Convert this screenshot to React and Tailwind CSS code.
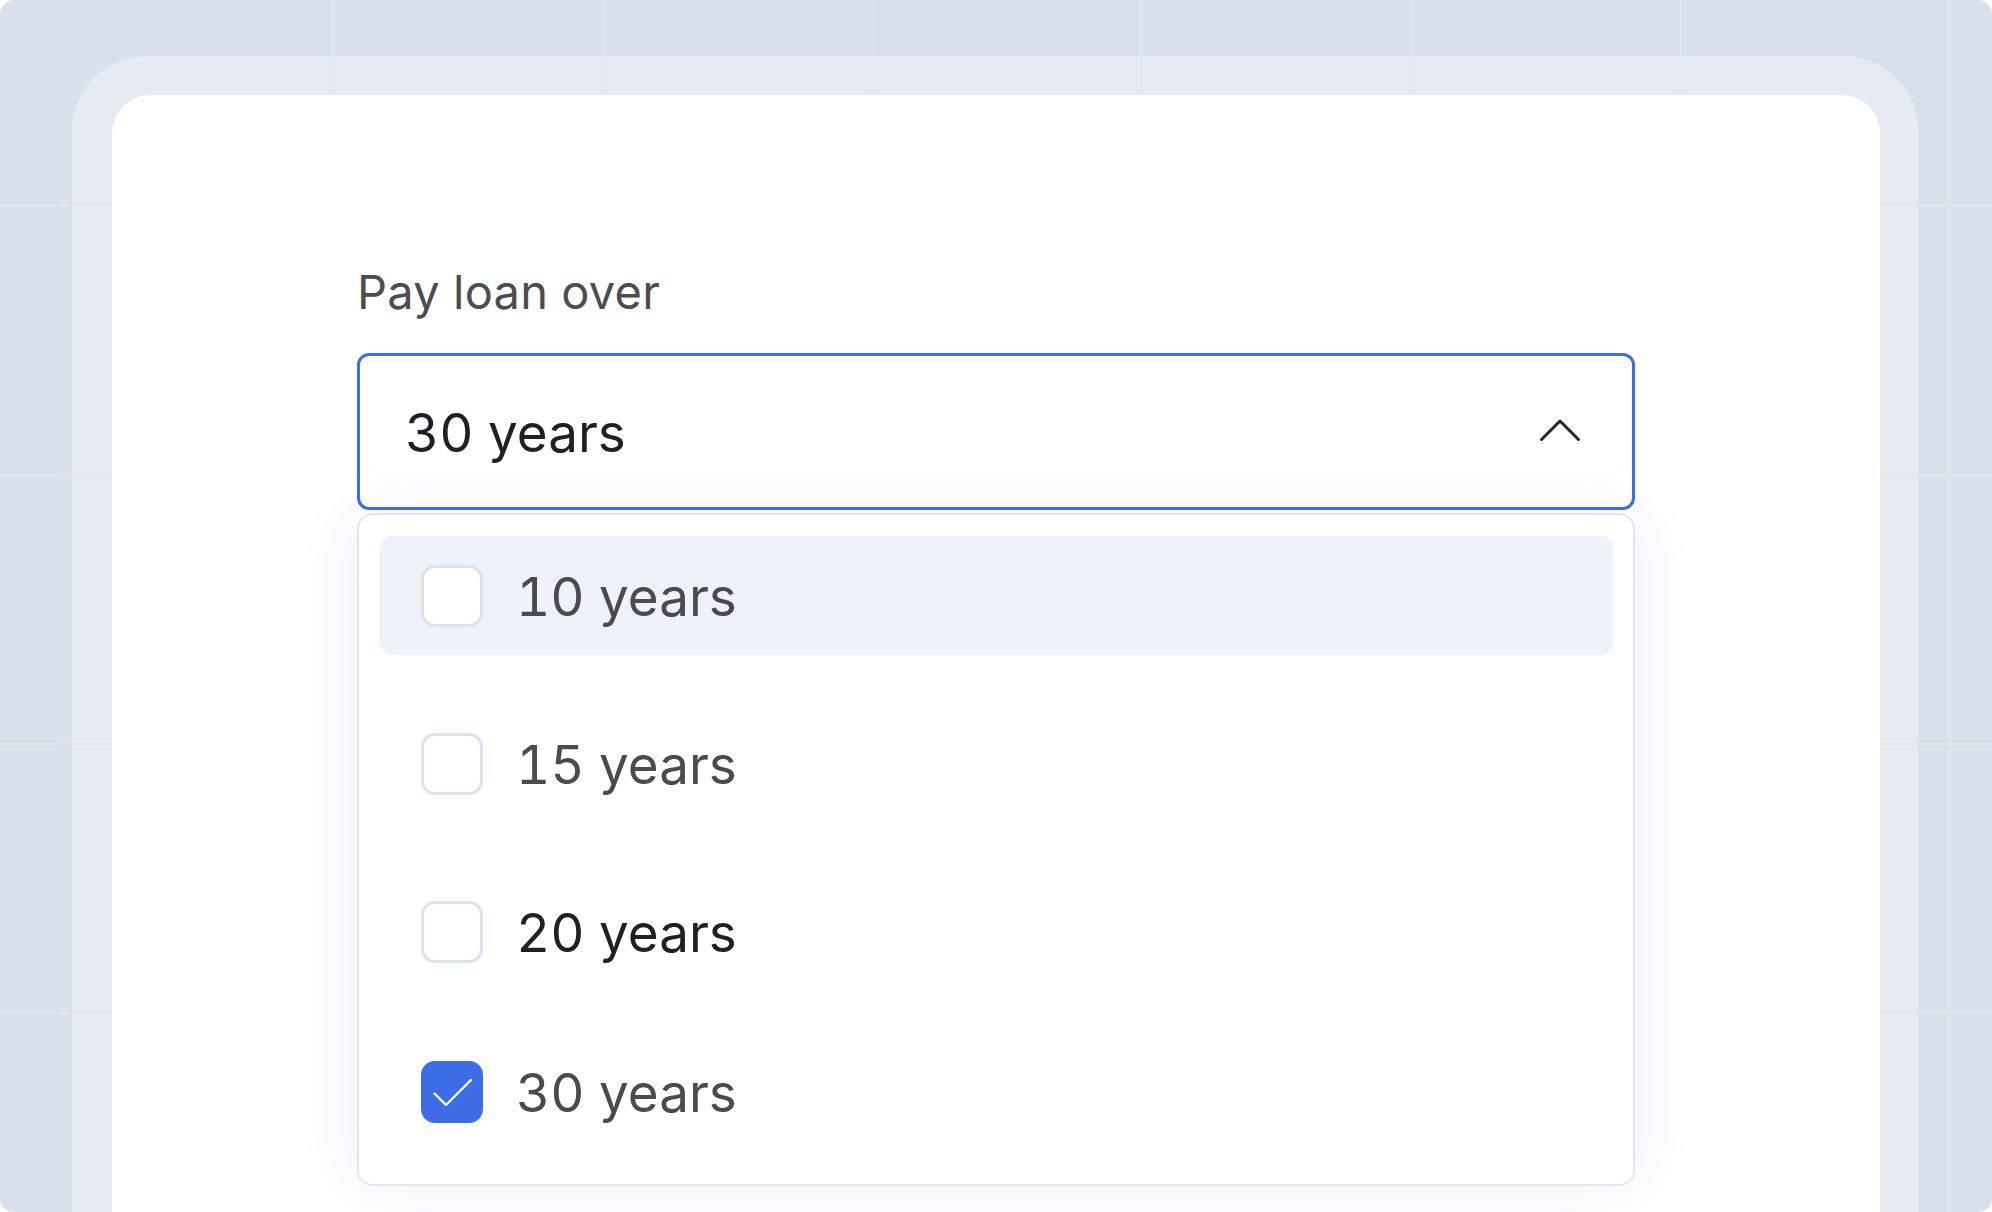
import React from 'react';

const options = [
    { label: '10 years', checked: false, active: true, dark: false },
    { label: '15 years', checked: false, active: false, dark: false },
    { label: '20 years', checked: false, active: false, dark: true },
    { label: '30 years', checked: true, active: false, dark: false },
];

const Checkbox = ({ checked }) => (
    checked ? (
        <div className="w-[62px] h-[62px] shrink-0 rounded-[14px] bg-[#3d6de6] flex items-center justify-center">
            <svg width="62" height="62" viewBox="0 0 62 62" fill="none">
                <path d="M13.5 32.5 L25 44 L50 19" stroke="white" strokeWidth="2.4" strokeLinecap="round" strokeLinejoin="round" />
            </svg>
        </div>
    ) : (
        <div className="w-[62px] h-[62px] shrink-0 rounded-[14px] border-[3px] border-[#dce3ee] bg-white" />
    )
);

export default function App() {
    return (
        <div className="w-[1992px] h-[1212px] bg-white">
            <div className="relative w-full h-full overflow-hidden rounded-[14px] bg-[#d9e0eb] pt-[56px] pl-[72px] pr-[74px]" style={{ fontFamily: 'Inter, "Noto Sans", sans-serif' }}>
                {/* faint background grid */}
                <div className="absolute inset-0 pointer-events-none bg-[linear-gradient(to_right,#e3e6ec_2px,transparent_2px),linear-gradient(to_bottom,#e3e6ec_2px,transparent_2px)] bg-[size:269.4px_269.4px] bg-[position:63px_204px]" />

                <div className="h-[1250px] rounded-t-[74px] bg-[#e7ecf4]/90 pt-[39px] pl-[40px] pr-[38px]">
                    <div className="relative z-10 h-full rounded-t-[38px] bg-white pt-[169px]">
                        <div className="w-[1278px] mx-auto tabular-nums">
                            <div className="text-[47px] leading-[56px] text-[#4b4d51] tracking-[0.3px]">Pay loan over</div>

                            <div className="mt-[33px] h-[157px] rounded-[12px] border-[3px] border-[#3d6fe5] bg-white flex items-center justify-between pl-[45px] pr-[51px]">
                                <span className="text-[53px] leading-none text-[#1f2023] pt-[3px]">30 years</span>
                                <svg width="42" height="24" viewBox="0 0 42 24" fill="none" className="mt-[-3px]">
                                    <path d="M2.5 21.5 L21 3 L39.5 21.5" stroke="#222326" strokeWidth="3" strokeLinecap="round" strokeLinejoin="round" />
                                </svg>
                            </div>

                            <div className="relative mt-[3px] rounded-[16px] border-2 border-[#e4e6eb] bg-white pt-[21px] pl-[21px] pr-[20px] pb-[33px] shadow-[0_0_70px_rgba(40,60,110,0.07)]">
                                {options.map((opt, i) => (
                                    <div
                                        key={opt.label}
                                        className={`h-[119px] rounded-[12px] flex items-center pl-[41px] ${opt.active ? 'bg-[#eef3fa]' : ''} ${i === 1 || i === 2 ? 'mt-[49px]' : ''} ${i === 3 ? 'mt-[41px]' : ''}`}
                                    >
                                        <Checkbox checked={opt.checked} />
                                        <span className={`ml-[33px] text-[53px] leading-none pt-[3px] ${opt.dark ? 'text-[#1f2023]' : 'text-[#4a4b4f]'}`}>
                                            {opt.label}
                                        </span>
                                    </div>
                                ))}
                            </div>
                        </div>
                    </div>
                </div>
            </div>
        </div>
    );
}
